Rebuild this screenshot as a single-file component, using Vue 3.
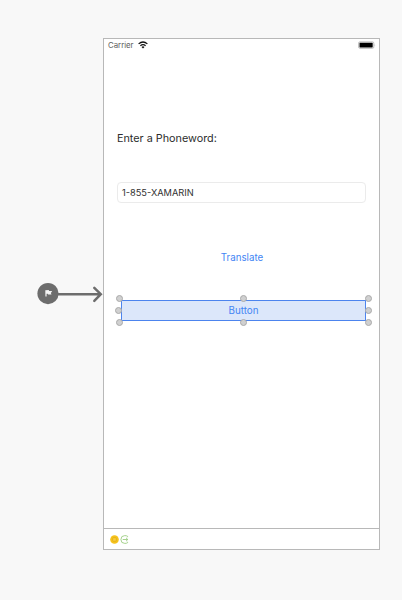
<script setup>
const handles = [
  'top-left', 'top', 'top-right',
  'left', 'right',
  'bottom-left', 'bottom', 'bottom-right',
]
</script>

<template>
  <main class="canvas">
    <div class="entry">
      <svg width="66" height="24" viewBox="0 0 66 24">
        <path class="shaft" d="M20 12.2H63.8M57.3 5.8L63.8 12.2L57.3 18.8" />
        <circle class="disc" cx="11" cy="11.6" r="10.6" />
        <path class="flag" d="M8.3 8.2L11.7 8.1L12.1 8.9H15.2L13.9 11L14.5 12.5H11.2L10.7 11.8H9.6V14.6H8.4Z" />
      </svg>
    </div>
    <section class="phone">
      <header class="status">
        <span>Carrier</span>
        <svg class="wifi" width="10" height="8" viewBox="0 0 10 8">
          <path d="M.6 2.9Q5 -.9 9.4 2.9M2.4 4.7Q5 2.5 7.6 4.7" />
          <path class="dot" d="M3.5 5.9Q5 4.7 6.5 5.9L5 7.4Z" />
        </svg>
        <svg class="battery" width="18" height="8" viewBox="0 0 18 8">
          <rect x=".6" y=".9" width="15.2" height="6.4" rx="1.2" fill="#fff" stroke="#bdbdbd" />
          <rect x="1.5" y="1.7" width="13.2" height="4.8" rx=".4" fill="#000" />
          <path d="M16.5 2.9Q18 4.1 16.5 5.3Z" fill="#bdbdbd" />
        </svg>
      </header>
      <div class="view">
        <label class="label">Enter a Phoneword:</label>
        <div class="field">1-855-XAMARIN</div>
        <div class="translate">Translate</div>
        <div class="selected">
          <span>Button</span>
          <i v-for="h in handles" :key="h" class="handle" :class="h"></i>
        </div>
      </div>
      <footer class="dock">
        <svg width="9" height="9" viewBox="0 0 9 9">
          <circle cx="4.5" cy="4.5" r="4.3" fill="#f6c21c" />
          <rect x="2.7" y="2.7" width="3.6" height="3.6" rx=".6" fill="#f8cc3c" stroke="#dba912" stroke-width=".7" />
        </svg>
        <svg width="9" height="9" viewBox="0 0 9 9" fill="none" stroke="#9ccd80" stroke-width=".9">
          <path d="M7.6 2.2V1.3Q6.5 .6 4.8 .6A3.9 3.9 0 0 0 4.8 8.4Q6.5 8.4 7.6 7.7V6.8" />
          <path d="M2.7 4.5H7.8M6 2.8L7.8 4.5L6 6.2" />
        </svg>
      </footer>
    </section>
  </main>
</template>

<style>
body {
  background: #f8f8f8;
}
</style>

<style scoped>
.canvas {
  box-sizing: border-box;
  width: 402px;
  height: 600px;
  padding: 38px 0 0 37px;
  display: flex;
  align-items: flex-start;
  background: #f8f8f8;
  font-family: Inter, "Liberation Sans", sans-serif;
}
.entry {
  width: 66px;
  flex: none;
  padding-top: 244px;
}
svg {
  display: block;
  flex: none;
}
.shaft {
  fill: none;
  stroke: #6d6d6d;
  stroke-width: 2.5;
  stroke-linecap: round;
}
.disc {
  fill: #6d6d6d;
}
.flag {
  fill: #f4f4f4;
}
.phone {
  box-sizing: border-box;
  width: 277px;
  height: 512px;
  flex: none;
  display: flex;
  flex-direction: column;
  border: 1px solid #b8b8b8;
  background: #fff;
}
.status {
  height: 12px;
  flex: none;
  display: flex;
  align-items: center;
  padding: 0 3px 0 4px;
  font-size: 7.8px;
  line-height: 12px;
  color: #5c5c5c;
}
.wifi {
  margin-left: 4px;
  fill: none;
  stroke: #111;
  stroke-width: 1.25;
}
.wifi .dot {
  fill: #111;
  stroke: none;
}
.battery {
  margin-left: auto;
}
.view {
  flex: 1;
  display: flex;
  flex-direction: column;
  padding: 80px 13px 0;
}
.label {
  height: 16px;
  font-size: 10.8px;
  line-height: 16px;
  color: #2c2c2c;
}
.field {
  box-sizing: border-box;
  height: 21px;
  margin-top: 35px;
  padding-left: 4px;
  border: 1px solid #ebebeb;
  border-radius: 4px;
  font-size: 9.25px;
  line-height: 19px;
  color: #303030;
}
.translate {
  height: 14px;
  margin-top: 48px;
  padding-left: 1px;
  font-size: 9.75px;
  line-height: 14px;
  text-align: center;
  color: #4285f4;
}
.selected {
  position: relative;
  box-sizing: border-box;
  height: 21px;
  margin: 35px 0 0 4px;
  border: 1px solid #4c84ee;
  background: #dce7fa;
  font-size: 9.8px;
  line-height: 20px;
  text-align: center;
  color: #4285f4;
}
.handle {
  position: absolute;
  box-sizing: border-box;
  width: 7px;
  height: 7px;
  border: 1px solid #aaa;
  border-radius: 50%;
  background: #d0d0d0;
}
.top-left, .top, .top-right { top: -6px; }
.left, .right { top: 6px; }
.bottom-left, .bottom, .bottom-right { bottom: -6px; }
.top-left, .bottom-left { left: -6.5px; }
.left { left: -7px; }
.top, .bottom { left: 118px; }
.top-right, .bottom-right { right: -6.5px; }
.right { right: -7px; }
.dock {
  box-sizing: border-box;
  height: 21px;
  flex: none;
  display: flex;
  align-items: center;
  gap: 1px;
  padding: 1px 0 0 6px;
  border-top: 1px solid #b8b8b8;
}
</style>
